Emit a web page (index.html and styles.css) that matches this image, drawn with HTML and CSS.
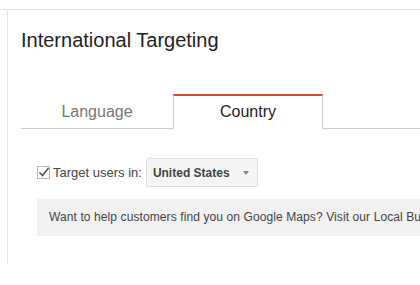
FILE: index.html
```html
<!DOCTYPE html>
<html>
<head>
<meta charset="utf-8">
<link rel="stylesheet" href="styles.css">
</head>
<body>
<div class="topbar"></div>
<div class="panel">
  <h1 class="title">International Targeting</h1>
  <div class="tabs">
    <div class="tab">Language</div>
    <div class="tab active">Country</div>
    <div class="tab-fill"></div>
  </div>
  <div class="target-row">
    <span class="checkbox">
      <svg width="13" height="13" viewBox="0 0 13 13"><rect x="0.5" y="0.5" width="12" height="12" fill="#fff" stroke="#b5b5b5"/><path d="M2.5 6.5 L5.5 9.5 L11.5 2" fill="none" stroke="#555" stroke-width="1.6"/></svg>
    </span>
    <span class="label">Target users in:</span>
    <div class="select">
      <span class="select-text">United States</span>
      <span class="arrow"></span>
    </div>
  </div>
  <div class="notice">Want to help customers find you on Google Maps? Visit our Local Bu</div>
</div>
</body>
</html>
```
FILE: styles.css
```css
html, body {
  margin: 0;
  padding: 0;
  background: #fff;
  overflow: hidden;
  font-family: Arial, "Liberation Sans", sans-serif;
}
.topbar {
  height: 9px;
  border-bottom: 1px solid #e5e5e5;
}
.panel {
  margin-left: 7px;
  border-left: 1px solid #e5e5e5;
  height: 254px;
  padding-left: 13px;
}
.title {
  margin: 0;
  padding-top: 18px;
  font-size: 20px;
  font-weight: normal;
  line-height: 24px;
  color: #222;
}
.tabs {
  display: flex;
  margin-top: 42px;
  height: 35px;
}
.tab {
  width: 152px;
  box-sizing: border-box;
  border-bottom: 1px solid #ccc;
  font-size: 16px;
  color: #777;
  text-align: center;
  padding-top: 9px;
}
.tab.active {
  width: 150px;
  border-top: 2px solid #d14836;
  border-left: 1px solid #ccc;
  border-right: 1px solid #ccc;
  border-bottom: none;
  color: #222;
  padding-top: 7px;
}
.tab-fill {
  flex: 1;
  border-bottom: 1px solid #ccc;
}
.target-row {
  display: flex;
  align-items: center;
  margin-top: 29px;
  padding-left: 16px;
  height: 29px;
}
.checkbox {
  display: flex;
  width: 13px;
  height: 13px;
  margin-right: 3px;
}
.label {
  font-size: 13px;
  color: #444;
  margin-right: 4px;
}
.select {
  display: flex;
  align-items: center;
  box-sizing: border-box;
  width: 112px;
  height: 29px;
  background: #f5f5f5;
  border: 1px solid #dcdcdc;
  border-radius: 2px;
  padding-left: 6px;
}
.select-text {
  font-size: 12px;
  font-weight: bold;
  color: #444;
  flex: 1;
}
.arrow {
  width: 0;
  height: 0;
  border-left: 3.5px solid transparent;
  border-right: 3.5px solid transparent;
  border-top: 4px solid #888;
  margin-right: 8px;
}
.notice {
  margin-top: 12px;
  margin-left: 16px;
  height: 37px;
  background: #f1f1f1;
  white-space: nowrap;
  font-size: 12px;
  letter-spacing: 0.1px;
  line-height: 37px;
  color: #444;
  padding-left: 12px;
  width: 600px;
}
```
